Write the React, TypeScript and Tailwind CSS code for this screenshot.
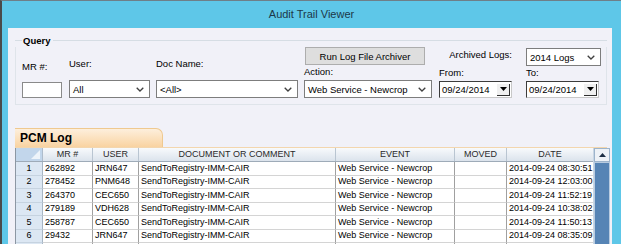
import React from "react";

const rows = [
  { n: 1, mr: "262892", user: "JRN647", date: "2014-09-24 08:30:51" },
  { n: 2, mr: "278452", user: "PNM648", date: "2014-09-24 12:03:00" },
  { n: 3, mr: "264370", user: "CEC650", date: "2014-09-24 11:52:19" },
  { n: 4, mr: "279189", user: "VDH628", date: "2014-09-24 10:38:02" },
  { n: 5, mr: "258787", user: "CEC650", date: "2014-09-24 11:50:13" },
  { n: 6, mr: "29432", user: "JRN647", date: "2014-09-24 08:35:09" },
  { n: 7, mr: "", user: "", date: "" },
];

function Chevron() {
  return (
    <svg width="8" height="5" viewBox="0 0 8 5">
      <path d="M0.7 0.7 L4 4 L7.3 0.7" fill="none" stroke="#404040" strokeWidth="1.3" />
    </svg>
  );
}

function Select({ value }: { value: string }) {
  return (
    <div className="flex h-[18px] items-center justify-between border border-[#7d7d7d] bg-white pl-[3px] pr-[5px]">
      <span>{value}</span>
      <Chevron />
    </div>
  );
}

function DateField({ value }: { value: string }) {
  return (
    <div className="flex h-[17px] items-center justify-between border border-t-[#3c3c3c] border-l-[#3c3c3c] border-r-[#c8c8c8] border-b-[#c8c8c8] bg-white pl-[2px] pr-[1px]">
      <span>{value}</span>
      <div className="flex h-[12px] w-[13px] items-center justify-center border-r border-b border-r-[#303030] border-b-[#303030] bg-[#f0f0f0]">
        <svg width="7" height="4" viewBox="0 0 7 4">
          <path d="M0 0 H7 L3.5 4 Z" fill="#000" />
        </svg>
      </div>
    </div>
  );
}

export default function App() {
  return (
    <div className="flex h-[244px] w-[621px] flex-col overflow-hidden border-t border-l-2 border-t-[#6e7f88] border-l-[#4a4a4a] bg-[#5ec7e8] font-['Liberation_Sans',Arial,sans-serif] text-[9.5px] leading-[11px] text-black">
      <div className="flex h-[27px] shrink-0 items-center justify-center text-[11px] text-[#1c3848]">
        Audit Trail Viewer
      </div>
      <div className="ml-[6px] mr-[9px] flex-1 shrink-0 bg-[#f1f1f8]">
        {/* Query group */}
        <div className="mt-[6px] ml-[7px] mr-[5px]">
          <div className="flex h-[13px] items-center">
            <div className="h-px w-[7px] bg-[#d6dde4]" />
            <span className="px-[1px] font-bold">Query</span>
            <div className="ml-[2px] h-px flex-1 bg-[#d6dde4]" />
          </div>
          <div className="flex h-[58px] items-start border-x border-b border-[#dfe4ea] pl-[6px]">
            <div className="flex h-[51px] items-end">
              <div className="flex w-[40px] flex-col">
                <span className="mb-[10px]">MR #:</span>
                <div className="h-[16px] border border-[#8a8a8a] bg-white" />
              </div>
              <div className="ml-[7px] flex w-[81px] flex-col">
                <span className="mb-[11px]">User:</span>
                <Select value="All" />
              </div>
              <div className="ml-[6px] flex w-[142px] flex-col">
                <span className="mb-[11px]">Doc Name:</span>
                <Select value="<All>" />
              </div>
              <div className="ml-[6px] flex w-[128px] flex-col">
                <button className="ml-[1px] h-[18px] w-[120px] border border-[#adadad] bg-[#dedede] text-[9.5px]">
                  Run Log File Archiver
                </button>
                <span className="mt-[1px] mb-[3px]">Action:</span>
                <Select value="Web Service - Newcrop" />
              </div>
              <div className="ml-[7px] flex w-[73px] flex-col">
                <span className="mb-[7px] text-right">Archived Logs:</span>
                <span className="mb-[3px]">From:</span>
                <DateField value="09/24/2014" />
              </div>
              <div className="ml-[14px] flex w-[73px] flex-col">
                <div className="w-[75px]">
                  <Select value="2014 Logs" />
                </div>
                <span className="mt-[1px] mb-[3px]">To:</span>
                <DateField value="09/24/2014" />
              </div>
            </div>
          </div>
        </div>

        {/* Tab strip */}
        <div className="mt-[23px] ml-[7px] mr-[5px] flex border-b border-[#f3d6ae]">
          <div className="flex h-[19px] w-[148px] items-center rounded-tr-[7px] border-t border-r border-[#efc98f] bg-gradient-to-b from-[#fdefdc] to-[#f9d3a1] pl-[5px] text-[12px] font-bold">
            PCM Log
          </div>
        </div>

        {/* Grid */}
        <div className="ml-[7px] mr-[2px] flex border-l border-[#8c97a3] bg-white text-[9px]">
          <div className="flex-1">
            <div className="grid h-[14px] grid-cols-[27px_50px_46px_197px_119px_52px_86px] border-b border-[#9eabb8] bg-gradient-to-b from-[#f8fafc] to-[#dbe3ec] text-[#2a2a2a]">
              <div className="relative border-r border-[#aebccb] bg-[#c2d6eb]">
                <svg className="absolute right-[2px] bottom-[2px]" width="9" height="9" viewBox="0 0 9 9">
                  <path d="M9 0 V9 H0 Z" fill="#eef4fa" />
                </svg>
              </div>
              <div className="flex items-center justify-center border-r border-[#b9c5d1]">MR #</div>
              <div className="flex items-center justify-center border-r border-[#b9c5d1]">USER</div>
              <div className="flex items-center justify-center border-r border-[#b9c5d1]">DOCUMENT OR COMMENT</div>
              <div className="flex items-center justify-center border-r border-[#b9c5d1]">EVENT</div>
              <div className="flex items-center justify-center border-r border-[#b9c5d1]">MOVED</div>
              <div className="flex items-center justify-center">DATE</div>
            </div>
            {rows.map((r) => (
              <div key={r.n} className="grid h-[13.5px] grid-cols-[27px_50px_46px_197px_119px_52px_86px]">
                <div className="flex items-center justify-center border-r border-b border-r-[#a8b6c4] border-b-[#c6d3e0] bg-[#dce7f3]">
                  {r.mr ? r.n : ""}
                </div>
                <div className="flex items-center border-r border-b border-r-[#a0a0a0] border-b-[#d4d4d4] pl-[2px]">{r.mr}</div>
                <div className="flex items-center border-r border-b border-r-[#a0a0a0] border-b-[#d4d4d4] pl-[2px]">{r.user}</div>
                <div className="flex items-center border-r border-b border-r-[#a0a0a0] border-b-[#d4d4d4] pl-[2px]">
                  {r.mr ? "SendToRegistry-IMM-CAIR" : ""}
                </div>
                <div className="flex items-center border-r border-b border-r-[#a0a0a0] border-b-[#d4d4d4] pl-[2px]">
                  {r.mr ? "Web Service - Newcrop" : ""}
                </div>
                <div className="flex items-center border-r border-b border-r-[#a0a0a0] border-b-[#d4d4d4]" />
                <div className="flex items-center border-b border-b-[#d4d4d4] pl-[2px]">{r.date}</div>
              </div>
            ))}
          </div>
          {/* Scrollbar */}
          <div className="flex w-[17px] flex-col border-l border-[#c9d6e4]">
            <div className="flex h-[14px] items-center justify-center border border-[#9db4cc] bg-[#eef2f7]">
              <svg width="7" height="4" viewBox="0 0 7 4">
                <path d="M0 4 H7 L3.5 0 Z" fill="#1d2e45" />
              </svg>
            </div>
            <div className="flex-1 border-x border-t border-[#b8cbe0] bg-[#5684b5]" />
          </div>
        </div>
      </div>
    </div>
  );
}
